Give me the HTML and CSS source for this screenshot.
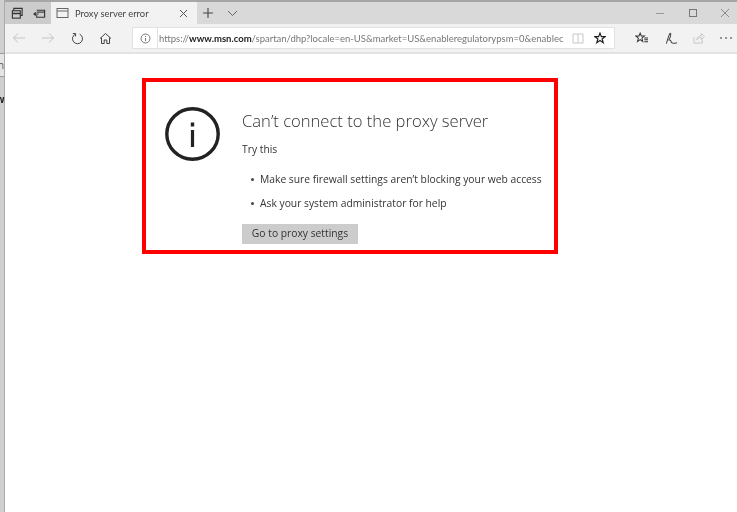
FILE: index.html
```html
<!DOCTYPE html>
<html>
<head>
    <meta charset="UTF-8">
    <title>Proxy server error</title>
    <link rel="stylesheet" href="styles.css">
</head>
<body>
<div class="screen">
    <div class="behind">
        <div class="behind-top"></div>
        <div class="behind-n"><span>n</span></div>
        <div class="behind-w"><span>w</span></div>
    </div>
    <div class="window">
        <div class="tabbar">
            <div class="tab-tools">
                <svg width="13" height="13" viewBox="0 0 14 14" fill="none" stroke="#333" stroke-width="1.2"><path d="M3 3.5V1.5H12V9H10"/><rect x="1.5" y="4" width="8.5" height="8"/><path d="M1.5 7H10" stroke-width="1.6"/></svg>
                <svg width="13" height="13" viewBox="0 0 14 14" fill="none" stroke="#333" stroke-width="1.2"><path d="M4 3.5H12.5V11H4V9"/><path d="M4 5.5H12.5" /><path d="M6 7.5H1M3 5.8L1 7.5L3 9.2"/></svg>
            </div>
            <div class="tab">
                <svg width="13" height="12" viewBox="0 0 13 12" fill="none" stroke="#666"><rect x="1" y="1.5" width="11" height="9"/><path d="M1 4H12"/></svg>
                <span class="tab-title">Proxy server error</span>
                <svg class="tab-close" width="9" height="9" viewBox="0 0 9 9" stroke="#555" stroke-width="1"><path d="M1 1L8 8M8 1L1 8"/></svg>
            </div>
            <svg class="new-tab" width="12" height="12" viewBox="0 0 12 12" stroke="#444" stroke-width="1.1"><path d="M6 1V11M1 6H11"/></svg>
            <svg class="tab-menu" width="11" height="7" viewBox="0 0 11 7" fill="none" stroke="#666" stroke-width="1"><path d="M1 1L5.5 5.5L10 1"/></svg>
            <div class="win-controls">
                <svg width="10" height="10" viewBox="0 0 10 10" stroke="#999"><path d="M1 5.5H9"/></svg>
                <svg width="10" height="10" viewBox="0 0 10 10" fill="none" stroke="#777"><rect x="1.5" y="1.5" width="7" height="7"/></svg>
                <svg width="10" height="10" viewBox="0 0 10 10" stroke="#888"><path d="M1 1L9 9M9 1L1 9"/></svg>
            </div>
        </div>
        <div class="toolbar">
            <div class="nav">
                <svg width="14" height="12" viewBox="0 0 14 12" fill="none" stroke="#c4c4c4" stroke-width="1"><path d="M13 6H1.5M6 1.5L1.5 6L6 10.5"/></svg>
                <svg width="14" height="12" viewBox="0 0 14 12" fill="none" stroke="#c4c4c4" stroke-width="1"><path d="M1 6H12.5M8 1.5L12.5 6L8 10.5"/></svg>
                <svg width="13" height="13" viewBox="0 0 13 13" fill="none" stroke="#444" stroke-width="1"><path d="M4.3 2.2A5 5 0 1 0 8.7 2.2"/><path d="M1.8 1.6H4.6V4.4"/></svg>
                <svg width="13" height="13" viewBox="0 0 13 13" fill="none" stroke="#444" stroke-width="1"><path d="M1 6.5L6.5 1.5L12 6.5"/><path d="M2.5 5.5V11.5H5.2V8H7.8V11.5H10.5V5.5"/></svg>
            </div>
            <div class="address">
                <svg class="addr-info" width="11" height="11" viewBox="0 0 11 11" fill="none" stroke="#777"><circle cx="5.5" cy="5.5" r="4.5"/><path d="M5.5 5V8.2M5.5 3V4"/></svg>
                <div class="addr-sep"></div>
                <div class="url">https://<b>www.msn.com</b>/spartan/dhp?locale=en-US&amp;market=US&amp;enableregulatorypsm=0&amp;enablec</div>
                <svg class="addr-read" width="12" height="11" viewBox="0 0 12 11" fill="none" stroke="#c8c8c8"><path d="M1 1H11V10H1ZM6 1V10"/></svg>
                <svg class="addr-star" width="12" height="12" viewBox="0 0 13 13" fill="none" stroke="#222" stroke-width="1.3"><path d="M6.5 1.2L8 5H12L8.8 7.5L10 11.6L6.5 9.2L3 11.6L4.2 7.5L1 5H5Z"/></svg>
            </div>
            <div class="tools">
                <svg width="14" height="12" viewBox="0 0 15 13" fill="none" stroke="#333" stroke-width="1.1"><path d="M5.5 1.2L6.8 4.4H10L7.4 6.6L8.3 10.4L5.5 8.3L2.6 10.4L3.6 6.6L1 4.4H4.2Z"/><path d="M10 6.5H14M10 8.5H14M10 10.5H14"/></svg>
                <svg width="14" height="13" viewBox="0 0 15 14" fill="none" stroke="#444" stroke-width="1.1"><path d="M2.5 12.5C4 8 5 3 6.5 1.5C8 1 7 6 5 9C6.5 8 7.5 9 8 11.5C9.5 12.5 12 12 14 11.5"/></svg>
                <svg width="12" height="12" viewBox="0 0 13 13" fill="none" stroke="#c4c4c4"><path d="M1 5.5V12H10V8"/><path d="M4 8.5C4.5 5.5 6.5 4 9 4V1.5L12.5 5L9 8V6C7 6 5 7 4 8.5Z"/></svg>
                <div class="more"><i></i><i></i><i></i></div>
            </div>
        </div>
        <div class="page">
            <div class="error-box">
                <svg class="error-icon" width="55" height="54" viewBox="0 0 55 54" fill="none" stroke="#222"><ellipse cx="27.5" cy="27" rx="25.7" ry="25.2" stroke-width="3.4"/><path d="M27.5 23V40" stroke-width="3.2"/><path d="M27.5 15.5V19.5" stroke-width="3.4"/></svg>
                <div class="error-body">
                    <h1>Can’t connect to the proxy server</h1>
                    <p class="try">Try this</p>
                    <ul>
                        <li>Make sure firewall settings aren’t blocking your web access</li>
                        <li>Ask your system administrator for help</li>
                    </ul>
                    <button class="proxy-btn">Go to proxy settings</button>
                </div>
            </div>
        </div>
    </div>
</div>
</body>
</html>
```

FILE: styles.css
```css
html, body {
    margin: 0;
    padding: 0;
    background: #fff;
}
body {
    width: 737px;
    height: 512px;
    overflow: hidden;
    font-family: "Open Sans", "Noto Sans", sans-serif;
}
.screen {
    display: flex;
    height: 512px;
}
.behind {
    width: 4px;
    flex: none;
    background: #cfcfcf;
    border-right: 1px solid #aaa;
    padding-top: 53px;
    overflow: hidden;
    font-size: 10px;
    color: #555;
    filter: blur(0.45px);
}
.behind-top {
    height: 1px;
    background: #999;
}
.behind-n {
    height: 22px;
    border-bottom: 1px solid #999;
    background: #e4e4e4;
    line-height: 22px;
}
.behind-n span {
    margin-left: -2px;
}
.behind-w {
    line-height: 44px;
    font-weight: bold;
    color: #222;
}
.behind-w span {
    margin-left: -4px;
}
.window {
    flex: 1;
    min-width: 0;
    display: flex;
    flex-direction: column;
}
.tabbar {
    height: 24px;
    flex: none;
    box-sizing: border-box;
    border-top: 2px solid #a6a6a6;
    background: #d9d9d9;
    display: flex;
    align-items: center;
    filter: blur(0.45px);
}
.tab-tools {
    width: 46px;
    height: 100%;
    box-sizing: border-box;
    background: #cccccc;
    display: flex;
    align-items: center;
    justify-content: space-between;
    padding: 0 5px 0 6px;
}
.tab {
    width: 146px;
    height: 100%;
    box-sizing: border-box;
    background: #f2f2f2;
    display: flex;
    align-items: center;
    padding: 0 9px 0 5px;
}
.tab-title {
    flex: 1;
    margin-left: 6px;
    font-family: "Lato", "Open Sans", sans-serif;
    font-size: 9.4px;
    color: #444;
}
.new-tab {
    margin-left: 5px;
}
.tab-menu {
    margin-left: 13px;
}
.win-controls {
    margin-left: auto;
    width: 75px;
    display: flex;
    justify-content: space-between;
    padding-right: 7px;
}
.toolbar {
    height: 30px;
    flex: none;
    box-sizing: border-box;
    background: #f2f2f2;
    border-bottom: 2px solid #e3e3e3;
    display: flex;
    align-items: center;
    filter: blur(0.45px);
}
.nav {
    width: 127px;
    flex: none;
    box-sizing: border-box;
    padding: 0 20px 0 7px;
    display: flex;
    align-items: center;
    justify-content: space-between;
}
.address {
    width: 483px;
    height: 22px;
    flex: none;
    box-sizing: border-box;
    background: #fff;
    border: 1px solid #e2e2e2;
    display: flex;
    align-items: center;
}
.addr-info {
    margin-left: 7px;
}
.addr-sep {
    width: 1px;
    height: 20px;
    background: #e2e2e2;
    margin-left: 6px;
}
.url {
    width: 406px;
    flex: none;
    margin-left: 1px;
    font-family: "Lato", "Open Sans", sans-serif;
    font-size: 9.5px;
    color: #777;
    white-space: nowrap;
}
.url b {
    color: #222;
    font-weight: 700;
}
.addr-read {
    margin-left: 7px;
}
.addr-star {
    margin-left: 10px;
}
.tools {
    flex: 1;
    display: flex;
    align-items: center;
    justify-content: space-between;
    padding: 0 5px 0 20px;
}
.more {
    display: flex;
    gap: 3px;
}
.more i {
    width: 2px;
    height: 2px;
    background: #777;
    border-radius: 50%;
}
.page {
    flex: 1;
    background: #fff;
    padding: 24px 0 0 137px;
}
.error-box {
    width: 416px;
    height: 176px;
    box-sizing: border-box;
    border: 4px solid #fe0000;
    display: flex;
    padding: 25px 0 0 19px;
    color: #333;
}
.error-icon {
    flex: none;
    filter: blur(0.3px);
}
.error-body {
    margin-left: 22px;
    filter: blur(0.45px);
}
h1 {
    margin: 3px 0 0;
    font-size: 16.6px;
    font-weight: 300;
    line-height: 22px;
    color: #333;
    white-space: nowrap;
}
.try {
    margin: 10px 0 0;
    font-size: 10.3px;
    line-height: 14px;
}
ul {
    list-style: none;
    margin: 16px 0 0;
    padding: 0;
    font-size: 10.3px;
}
li {
    line-height: 14px;
    margin-bottom: 10px;
    padding-left: 18px;
    position: relative;
    white-space: nowrap;
}
li::before {
    content: "";
    position: absolute;
    left: 9px;
    top: 6px;
    width: 3px;
    height: 3px;
    border-radius: 50%;
    background: #444;
}
.proxy-btn {
    display: block;
    width: 116px;
    height: 20px;
    margin-top: 14px;
    padding: 0 0 2px;
    border: none;
    background: #cccccc;
    color: #333;
    font-family: inherit;
    font-size: 10.3px;
}
```
